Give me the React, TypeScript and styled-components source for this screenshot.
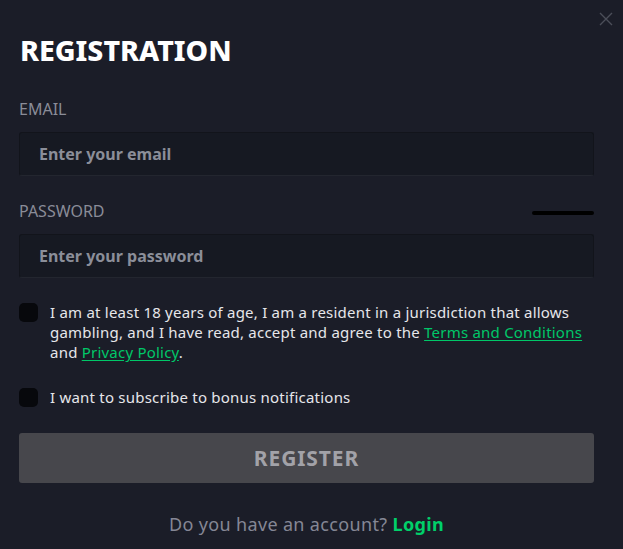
import React from "react";
import styled, { createGlobalStyle } from "styled-components";

const Global = createGlobalStyle`
  html, body { margin: 0; padding: 0; background: #1b1d28; }
  body { font-family: "Noto Sans", "Open Sans", sans-serif; }
  * { box-sizing: border-box; }
`;

const Modal = styled.div`
  position: relative;
  width: 623px;
  height: 549px;
  background: #1b1d28;
  padding: 32px 29px 0 19px;
  display: flex;
  flex-direction: column;
  overflow: hidden;
`;

const Close = styled.button`
  position: absolute;
  top: 11px;
  right: 9px;
  width: 16px;
  height: 16px;
  padding: 0;
  border: none;
  background: transparent;
  display: flex;
  align-items: center;
  justify-content: center;
`;

const Title = styled.h1`
  margin: 0 0 0 1px;
  font-family: "Noto Sans", sans-serif;
  font-weight: 800;
  font-size: 28.5px;
  line-height: 36px;
  color: #ffffff;
`;

const Label = styled.div<{ $top: number }>`
  margin-top: ${(p) => p.$top}px;
  display: flex;
  justify-content: space-between;
  align-items: center;
  font-size: 16px;
  line-height: 20px;
  color: #8a8c98;
`;

const Strength = styled.div`
  width: 62px;
  height: 4px;
  border-radius: 2px;
  background: #000;
  margin-top: 4px;
`;

const Input = styled.input`
  margin-top: 13px;
  width: 100%;
  height: 44px;
  background: #161922;
  border: 1px solid #12141b;
  border-bottom-color: #23262f;
  border-radius: 3px;
  padding: 0 19px;
  font-family: "Noto Sans", sans-serif;
  font-weight: 700;
  font-size: 16px;
  color: #fff;
  outline: none;
  &::placeholder { color: #8b8e99; }
`;

const CheckRow = styled.label<{ $top: number }>`
  margin-top: ${(p) => p.$top}px;
  display: flex;
  align-items: flex-start;
  gap: 12px;
  font-size: 15px;
  line-height: 20px;
  letter-spacing: 0.22px;
  color: #e6e6ea;
`;

const Box = styled.span`
  flex: none;
  width: 19px;
  height: 19px;
  border-radius: 5px;
  background: #07080c;
  margin-top: 1px;
`;

const Link = styled.a`
  color: #00c768;
  text-decoration: underline;
  text-underline-offset: 2px;
`;

const Button = styled.button`
  margin-top: 26px;
  width: 100%;
  height: 50px;
  border: none;
  border-radius: 3px;
  background: #47474c;
  color: #a2a2a8;
  font-family: "Noto Sans", sans-serif;
  font-weight: 700;
  font-size: 21px;
  letter-spacing: 0.9px;
`;

const Footer = styled.div`
  margin-top: 30px;
  text-align: center;
  font-size: 18px;
  line-height: 22px;
  letter-spacing: 0.35px;
  color: #858795;
`;

const Login = styled.a`
  color: #00d06a;
  font-weight: 700;
`;

export default function App() {
  return (
    <>
      <Global />
      <Modal>
        <Close aria-label="close">
          <svg width="14" height="14" viewBox="0 0 14 14">
            <path d="M1 1L13 13M13 1L1 13" stroke="#4b4e59" strokeWidth="1.4" />
          </svg>
        </Close>
        <Title>REGISTRATION</Title>
        <Label $top={31}>EMAIL</Label>
        <Input placeholder="Enter your email" />
        <Label $top={25}>
          <span>PASSWORD</span>
          <Strength />
        </Label>
        <Input placeholder="Enter your password" />
        <CheckRow $top={24}>
          <Box />
          <span>
            I am at least 18 years of age, I am a resident in a jurisdiction that allows
            gambling, and I have read, accept and agree to the{" "}
            <Link>Terms and Conditions</Link> and <Link>Privacy Policy</Link>.
          </span>
        </CheckRow>
        <CheckRow $top={25}>
          <Box />
          <span>I want to subscribe to bonus notifications</span>
        </CheckRow>
        <Button>REGISTER</Button>
        <Footer>
          Do you have an account? <Login>Login</Login>
        </Footer>
      </Modal>
    </>
  );
}
